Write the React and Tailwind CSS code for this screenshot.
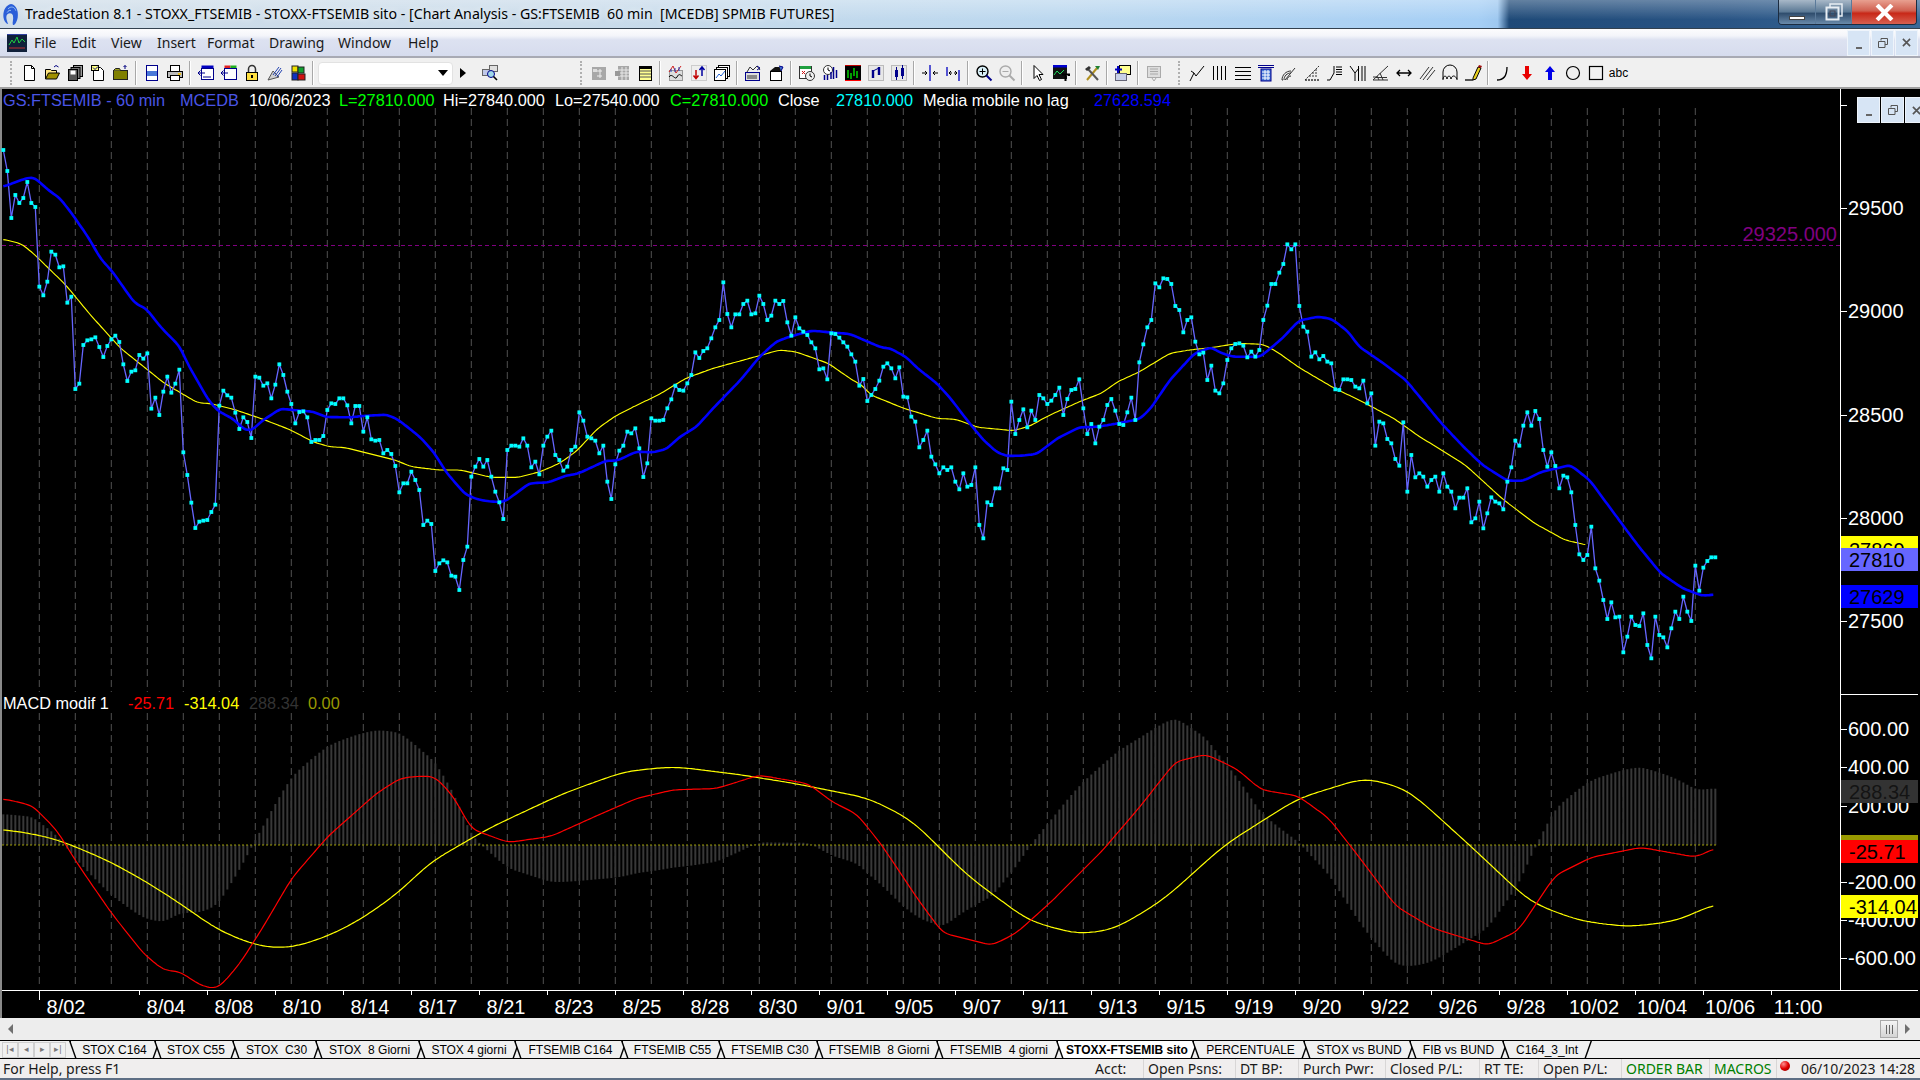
import React from "react";

// raw trace of the close, every 4px on x. y = 220 + v / 3
const closeTrace = [
  -210, -147, -6, -75, -51, -66, -114, -51, -39,
  200, 226, 185, 95, 104, 142, 139, 248, 230, 507, 491, 375, 361, 358, 352, 381, 411, 378, 358, 347, 366,
  433, 483, 455, 451, 405, 416, 400, 566, 533, 585, 515, 470, 518, 491, 449, 697, 765, 848, 924, 905,
  902, 900, 876, 854, 557, 512, 526, 533, 578, 627, 592, 606, 654, 470, 473, 497, 490, 535, 494, 433,
  465, 515, 552, 610, 576, 574, 592, 666, 660, 660, 648, 570, 550, 552, 535, 535, 556, 610, 558, 558,
  635, 592, 658, 662, 660, 700, 690, 702, 738, 817, 790, 790, 755, 780, 810, 915, 902, 912, 1053, 1030,
  1021, 1027, 1067, 1070, 1110, 1020, 980, 770, 740, 717, 740, 720, 770, 815, 847, 897, 690, 677, 677, 680,
  655, 677, 742, 725, 763, 677, 650, 632, 705, 720, 752, 740, 690, 680, 577, 602, 650, 655, 662, 700,
  677, 785, 837, 733, 692, 677, 635, 640, 625, 685, 771, 730, 595, 602, 602, 600, 565, 538, 497, 510,
  512, 490, 465, 397, 414, 393, 385, 355, 322, 300, 187, 282, 322, 283, 283, 252, 242, 283, 280, 227,
  252, 300, 287, 242, 252, 243, 307, 347, 292, 325, 335, 345, 367, 385, 448, 445, 478, 340, 342, 353,
  367, 380, 403, 425, 497, 477, 543, 525, 507, 482, 440, 430, 445, 475, 442, 530, 532, 590, 605, 682,
  660, 632, 710, 733, 760, 742, 750, 742, 785, 808, 760, 800, 795, 742, 915, 955, 847, 855, 805, 805,
  745, 750, 545, 642, 600, 568, 622, 572, 600, 525, 535, 552, 542, 525, 503, 585, 537, 510, 507, 478,
  565, 642, 612, 670, 620, 600, 555, 537, 572, 612, 615, 577, 533, 600, 427, 373, 322, 300, 190, 202,
  175, 177, 192, 258, 270, 337, 300, 292, 365, 403, 398, 480, 437, 512, 520, 490, 420, 385, 372, 370,
  377, 412, 395, 410, 390, 300, 257, 192, 192, 158, 132, 73, 88, 73, 258, 320, 335, 410, 397, 418,
  408, 425, 430, 508, 510, 478, 478, 480, 500, 505, 482, 550, 520, 677, 605, 610, 657, 670, 717, 737,
  607, 815, 705, 772, 760, 770, 800, 780, 770, 815, 760, 800, 815, 865, 833, 833, 805, 907, 895, 845,
  925, 880, 832, 845, 850, 868, 785, 742, 662, 677, 617, 577, 617, 573, 597, 690, 740, 697, 738, 805,
  767, 772, 817, 915, 1003, 1020, 1005, 920, 1045, 1082, 1140, 1197, 1147, 1192, 1190, 1297, 1250, 1190, 1215, 1218,
  1180, 1275, 1315, 1190, 1245, 1252, 1282, 1225, 1175, 1197, 1130, 1175, 1203, 1037, 1112, 1043, 1023, 1012, 1012,
];

const closePts = closeTrace.map((v, i) => [3.33 + 4 * i, 220 + v / 3]);

const fromA = (pts) => pts.map(([x, y]) => [x / 3, 130 + y / 3]);
const fromB = (pts) => pts.map(([x, y]) => [x / 1.823, 220 + y / 3]);
const fromC = (pts) => pts.map(([x, y]) => [860 + x / 1.823, 220 + y / 3]);
const fromD = (pts) => pts.map(([x, y]) => [x / 3, 680 + y / 3]);
const fromE = (pts) => pts.map(([x, y]) => [x * 1.2245, y * 1.2245]);

const blueMa = [
  ...fromA([[10, 170], [50, 155], [85, 143], [105, 144], [145, 180], [180, 205], [215, 250], [265, 322]]),
  ...fromB([[183, 115], [205, 155], [245, 248], [267, 267], [295, 325], [327, 378], [345, 440], [380, 540], [397, 572], [425, 597], [445, 628], [458, 632], [480, 600], [512, 566], [535, 570], [570, 575], [595, 591], [640, 592], [660, 588], [705, 584], [725, 598], [765, 650], [790, 695], [815, 760], [848, 822], [870, 838], [895, 845], [920, 845], [945, 815], [965, 790], [1000, 787], [1030, 768], [1055, 760], [1105, 722], [1125, 722], [1160, 695], [1190, 697], [1215, 687], [1240, 650], [1270, 620], [1300, 565], [1350, 480], [1385, 410], [1415, 365], [1440, 350], [1480, 332], [1520, 338], [1550, 342]]),
  ...fromC([[0, 355], [40, 383], [55, 385], [85, 412], [105, 445], [140, 490], [165, 535], [195, 600], [225, 660], [250, 697], [268, 708], [295, 707], [322, 702], [360, 655], [400, 622], [435, 620], [470, 610], [510, 597], [530, 565], [565, 480], [610, 400], [640, 382], [660, 400], [680, 410], [730, 410], [770, 355], [800, 302], [835, 290], [860, 297], [890, 335], [910, 380], [950, 425], [995, 480], [1060, 610], [1100, 680], [1135, 735], [1180, 782], [1210, 782], [1240, 757], [1295, 735], [1330, 780], [1395, 925], [1420, 980], [1460, 1060], [1500, 1105], [1535, 1127], [1558, 1124]]),
];

const yellowMa = [
  ...fromA([[10, 328], [40, 335], [65, 342], [100, 370]]),
  ...fromB([[70, 115], [120, 195], [165, 285], [220, 385], [300, 490], [360, 548], [385, 551], [430, 570], [480, 598], [530, 630], [570, 665], [600, 680], [630, 683], [720, 720], [750, 740], [800, 750], [840, 750], [895, 772], [945, 772], [985, 755], [1020, 730], [1050, 695], [1090, 625], [1120, 590], [1155, 560], [1200, 525], [1250, 475], [1300, 445], [1400, 400], [1420, 390], [1450, 395], [1510, 430], [1560, 487]]),
  ...fromC([[0, 490], [20, 525], [80, 565], [140, 595], [175, 598], [215, 622], [280, 632], [310, 618], [340, 590], [400, 545], [440, 520], [470, 485], [510, 455], [565, 400], [600, 390], [640, 383], [690, 370], [735, 373], [760, 395], [800, 442], [865, 505], [910, 540], [975, 597], [1020, 650], [1060, 690], [1105, 737], [1170, 835], [1230, 910], [1285, 960], [1325, 975]]),
];

const macdRedRaw = [
  ...fromD([[10, 357], [50, 365], [100, 378], [115, 395], [170, 450], [235, 555], [335, 700], [430, 820], [490, 870], [540, 875], [600, 915], [640, 926], [660, 920], [720, 850], [790, 740], [875, 595], [985, 468], [1130, 340], [1200, 295]]),
  ...fromE([[340, 634], [355, 634], [370, 650], [385, 677], [415, 688], [450, 683], [490, 665], [520, 652], [550, 645], [585, 644], [620, 633], [660, 640], [680, 655], [700, 665], [720, 690], [750, 735], [770, 762], [810, 772], [830, 762], [860, 735], [900, 695], [930, 660], [960, 622], [985, 616], [1010, 628], [1030, 645], [1060, 650], [1085, 668], [1110, 700], [1140, 740], [1170, 758], [1215, 772], [1240, 760], [1270, 715], [1300, 700], [1340, 692], [1385, 700], [1400, 693]]),
];

const macdYellowRaw = [
  ...fromD([[10, 448], [100, 462], [170, 478], [250, 510], [330, 545], [430, 600], [540, 670], [650, 748], [750, 790], [810, 804], [880, 802], [980, 770], [1080, 720], [1200, 635]]),
  ...fromE([[350, 705], [400, 676], [460, 648], [510, 630], [550, 626], [600, 632], [650, 640], [710, 652], [745, 670], [790, 715], [840, 752], [880, 763], [910, 759], [950, 735], [1000, 690], [1060, 652], [1115, 635], [1150, 645], [1200, 690], [1250, 737], [1290, 752], [1330, 757], [1370, 752], [1400, 738]]),
];

function valueAt(pts, x) {
  if (x <= pts[0][0]) return pts[0][1];
  for (let i = 1; i < pts.length; i++) {
    if (x <= pts[i][0]) {
      const [x0, y0] = pts[i - 1];
      const [x1, y1] = pts[i];
      return y0 + ((y1 - y0) * (x - x0)) / (x1 - x0 || 1);
    }
  }
  return pts[pts.length - 1][1];
}

// soften the hand traced corners, r is the half window in px
function smooth(pts, r) {
  const first = pts[0][0];
  const last = pts[pts.length - 1][0];
  const out = [];
  for (let x = first; x <= last; x += 2) {
    let sum = 0;
    let weight = 0;
    for (let k = -4; k <= 4; k++) {
      const w = 5 - Math.abs(k);
      sum += w * valueAt(pts, x + (k * r) / 4);
      weight += w;
    }
    out.push([x, sum / weight]);
  }
  return out;
}

const blueLine = smooth(blueMa, 5);
const yellowLine = smooth(yellowMa, 6);
const macdRed = smooth(macdRedRaw, 9);
const macdYellow = smooth(macdYellowRaw, 22);

const toPoints = (pts) => pts.map(([x, y]) => `${x.toFixed(1)},${y.toFixed(1)}`).join(" ");

const gridXs = Array.from({ length: 47 }, (_, i) => 39.3 + 36 * i);

const dates = ["8/04", "8/08", "8/10", "8/14", "8/17", "8/21", "8/23", "8/25", "8/28", "8/30", "9/01", "9/05", "9/07", "9/11", "9/13", "9/15", "9/19", "9/20", "9/22", "9/26", "9/28", "10/02", "10/04", "10/06", "11:00"];

const priceTicks = [
  [105, ""],
  [208, "29500"],
  [311, "29000"],
  [415, "28500"],
  [518, "28000"],
  [621, "27500"],
];

const macdTicks = [
  [729, "600.00"],
  [767, "400.00"],
  [806, "200.00"],
  [882, "-200.00"],
  [920, "-400.00"],
  [958, "-600.00"],
];

function ChartDrawing() {
  const bars = [];
  for (let i = 0; i < 429; i++) {
    const x = 3.33 + 4 * i;
    const diff = valueAt(macdYellow, x) - valueAt(macdRed, x);
    bars.push(<rect key={i} x={x - 1} y={Math.min(845, 845 - diff)} width="2" height={Math.abs(diff)} fill="#383838" />);
  }

  return (
    <svg viewBox="0 89 1920 929" className="block h-full w-full font-['Liberation_Sans',sans-serif]">
      {gridXs.map((x) => (
        <g key={x} stroke="#505050" strokeDasharray="7 4">
          <line x1={x} y1="108" x2={x} y2="692" />
          <line x1={x} y1="713" x2={x} y2="988" />
        </g>
      ))}
      <line x1="2" y1="245.5" x2="1840" y2="245.5" stroke="#800080" strokeDasharray="4 3" />

      {/* price pane */}
      <polyline points={toPoints(yellowLine)} fill="none" stroke="#ffff00" strokeWidth="1.15" />
      <polyline points={toPoints(closePts)} fill="none" stroke="#6666ff" strokeWidth="1.3" />
      <polyline points={toPoints(blueLine)} fill="none" stroke="#0000ff" strokeWidth="2.6" />
      {closePts.map(([x, y]) => (
        <rect key={x} x={x - 1.9} y={y - 1.9} width="3.8" height="3.8" fill="#00ffff" />
      ))}
      <text x="1837" y="241" textAnchor="end" className="fill-[#800080] text-[20px]">29325.000</text>

      {/* macd pane */}
      {bars}
      <line x1="2" y1="845" x2="1716" y2="845" stroke="#999900" strokeDasharray="2 2" />
      <polyline points={toPoints(macdYellow)} fill="none" stroke="#ffff00" strokeWidth="1.2" />
      <polyline points={toPoints(macdRed)} fill="none" stroke="#ff0000" strokeWidth="1.2" />

      {/* right scale */}
      <line x1="1840.5" y1="89" x2="1840.5" y2="990" stroke="#fff" />
      <line x1="1841" y1="694.5" x2="1918" y2="694.5" stroke="#fff" />
      {priceTicks.map(([y, label]) => (
        <g key={y}>
          <line x1="1841" y1={y + 0.5} x2="1847" y2={y + 0.5} stroke="#fff" />
          <text x="1848" y={y + 7} className="fill-white text-[20px]">{label}</text>
        </g>
      ))}
      {macdTicks.map(([y, label]) => (
        <g key={y}>
          <line x1="1841" y1={y + 0.5} x2="1847" y2={y + 0.5} stroke="#fff" />
          <text x="1848" y={y + 7} className="fill-white text-[20px]">{label}</text>
        </g>
      ))}

      <rect x="1841" y="536" width="77" height="14" fill="#ffff00" />
      <text x="1849" y="557" className="fill-black text-[20px]">27869</text>
      <rect x="1841" y="548" width="77" height="23" fill="#6666ff" />
      <text x="1849" y="567" className="fill-black text-[20px]">27810</text>
      <rect x="1841" y="585" width="77" height="23" fill="#0000ff" />
      <text x="1849" y="604" className="fill-black text-[20px]">27629</text>

      <rect x="1841" y="780" width="77" height="23" fill="#333333" />
      <text x="1849" y="799" className="fill-[#141414] text-[20px]">288.34</text>
      <rect x="1841" y="835" width="77" height="6" fill="#999900" />
      <rect x="1841" y="840" width="77" height="23" fill="#ff0000" />
      <text x="1849" y="859" className="fill-black text-[20px]">-25.71</text>
      <rect x="1841" y="895" width="77" height="23" fill="#ffff00" />
      <text x="1849" y="914" className="fill-black text-[20px]">-314.04</text>

      {/* date scale */}
      <line x1="2" y1="990.5" x2="1918" y2="990.5" stroke="#fff" />
      <line x1="39.5" y1="990" x2="39.5" y2="1000" stroke="#fff" />
      <text x="66" y="1014" textAnchor="middle" className="fill-white text-[20px]">8/02</text>
      {dates.map((d, i) => (
        <g key={d}>
          <line x1={139.5 + 68 * i} y1="990" x2={139.5 + 68 * i} y2="995" stroke="#fff" />
          <text x={166 + 68 * i} y="1014" textAnchor="middle" className="fill-white text-[20px]">{d}</text>
        </g>
      ))}
    </svg>
  );
}

const K = { stroke: "#000", fill: "none" };

const icons = {
  newDoc: <><path d="M4.5 1.5h7l3 3v12h-10z" fill="#fff" stroke="#000" /><path d="M11.5 1.5v3h3" {...K} /></>,
  open: <><path d="M2.5 15V5.5h5l1 1h5v3" fill="#ffe680" stroke="#000" /><path d="M2.5 15l3-6h11l-3 6z" fill="#a09000" stroke="#000" /><path d="M11 3l2-1.5 2.5 1.5" stroke="#000080" fill="none" /></>,
  floppies: <><rect x="7.5" y="1.5" width="9" height="11" fill="#999" stroke="#000" /><rect x="5" y="3.5" width="9" height="11" fill="#777" stroke="#000" /><rect x="2.5" y="5.5" width="9" height="11" fill="#555" stroke="#000" /><rect x="4.5" y="6.5" width="5" height="4" fill="#fff" /></>,
  noteDoc: <><path d="M4.5 3.5h7l3 3v10h-10z" fill="#fff" stroke="#000" /><rect x="2.5" y="1.5" width="7" height="5" fill="#ffff80" stroke="#000" /><path d="M4 3.5l2 2 3-3" stroke="#000080" fill="none" /></>,
  box: <><rect x="1.5" y="6.5" width="14" height="9" fill="#808000" stroke="#222" /><path d="M1.5 6.5l2-2h4l1 2" fill="#a0a020" stroke="#222" /><path d="M13 5V1.5M11.5 3L13 1.5 14.5 3" stroke="#000080" fill="none" /></>,
  preview: <><rect x="3.5" y="1.5" width="11" height="15" fill="#fff" stroke="#00008b" /><rect x="4" y="7" width="10" height="5" fill="#4a78d8" /></>,
  printer: <><rect x="4.5" y="1.5" width="9" height="6" fill="#fff" stroke="#000" /><rect x="1.5" y="7.5" width="15" height="6" fill="#bbb" stroke="#000" /><rect x="4.5" y="11.5" width="9" height="5" fill="#fff" stroke="#000" /><rect x="12" y="9" width="3" height="2" fill="#e8c020" /></>,
  winBlue: <><rect x="4.5" y="1.5" width="12" height="3" fill="#0000c0" /><rect x="4.5" y="4.5" width="12" height="11" fill="#fff" stroke="#00008b" /><path d="M1 9h7M3.5 6.5L1 9l2.5 2.5" stroke="#00008b" fill="none" /><path d="M6 13h8" stroke="#00008b" /></>,
  winFlag: <><rect x="4.5" y="1.5" width="6" height="3" fill="#e02020" /><rect x="10.5" y="1.5" width="6" height="3" fill="#20b020" /><rect x="4.5" y="4.5" width="12" height="11" fill="#fff" stroke="#00008b" /><path d="M1 9h7M3.5 6.5L1 9l2.5 2.5" stroke="#00008b" fill="none" /></>,
  lock: <><path d="M5.5 8V5a3.5 3.5 0 017 0v3" stroke="#333" strokeWidth="1.5" fill="none" /><rect x="3.5" y="8.5" width="11" height="8" fill="#ffe040" stroke="#000" /><rect x="8" y="11" width="2" height="3" fill="#000" /></>,
  dish: <><path d="M2 16l5-9 6 6z" fill="#d0d0d0" stroke="#555" /><path d="M7 11l6-8M9 12l6-8M11 13l5-7" stroke="#2040b0" /></>,
  cubes: <><rect x="3" y="2" width="6" height="6" fill="#f0e000" stroke="#222" /><rect x="9" y="3" width="6" height="6" fill="#10a030" stroke="#222" /><rect x="3" y="9" width="6" height="7" fill="#1030c0" stroke="#222" /><rect x="9" y="10" width="7" height="6" fill="#d01010" stroke="#222" /></>,
  searchDoc: <><rect x="1.5" y="5.5" width="9" height="6" fill="#c0c8e8" stroke="#666" /><rect x="8.5" y="1.5" width="8" height="6" fill="#e0e0e0" stroke="#666" /><circle cx="10" cy="10" r="3.5" fill="#a0d8e8" stroke="#00008b" /><path d="M12.5 12.5l3.5 3.5" stroke="#000" strokeWidth="1.6" /></>,
  grayCalc: <><rect x="2" y="3" width="14" height="13" fill="#a8a8a8" /><path d="M10 5v9M7 7h5M7 12h5" stroke="#eee" /><rect x="3" y="5" width="4" height="3" fill="#ddd" /></>,
  grayTable: <><rect x="5" y="2" width="11" height="14" fill="#a8a8a8" /><path d="M5 6h11M5 9h11M5 12h11M9 3v13M13 3v13" stroke="#e8e8e8" /><rect x="2" y="7" width="5" height="5" fill="#999" /></>,
  table: <><rect x="3.5" y="2.5" width="12" height="14" fill="#ffff90" stroke="#000" /><rect x="3" y="2" width="13" height="3" fill="#000" /><path d="M4 7h11M4 10h11M4 13h11" stroke="#555" /></>,
  waves: <><rect x="2.5" y="6.5" width="13" height="10" fill="#ddd" stroke="#999" /><path d="M2 8l4-6 3 7 5-7" stroke="#d02020" fill="none" /><path d="M2 13c3-5 6 4 8 0s3-2 5-1" stroke="#000" fill="none" /><path d="M4 5v3M8 4v4M12 3v4" stroke="#2040c0" /></>,
  updown: <><rect x="1.5" y="1.5" width="15" height="15" fill="#eee" stroke="#ccc" /><path d="M6 6v8M3.5 11.5L6 14.5 8.5 11.5" stroke="#c00000" strokeWidth="1.5" fill="none" /><path d="M12 12V3M9.5 6L12 3l2.5 3" stroke="#0000a0" strokeWidth="1.5" fill="none" /></>,
  stack: <><rect x="5.5" y="1.5" width="11" height="11" fill="#fff" stroke="#000" /><rect x="3.5" y="3.5" width="11" height="11" fill="#fff" stroke="#000" /><rect x="1.5" y="5.5" width="11" height="11" fill="#fff" stroke="#000" /><path d="M3 14l3-4 2 2 4-5" stroke="#2060d0" fill="none" /></>,
  winChart: <><rect x="1.5" y="8.5" width="14" height="8" fill="#ddd" stroke="#00008b" /><path d="M3 8l3-5 3 3 4-4 3 4M3 12h10M3 14h10" stroke="#333" fill="none" /><path d="M13 2l3 2-3 2" stroke="#00008b" fill="none" /></>,
  box2: <><rect x="3.5" y="7.5" width="11" height="9" fill="#fff" stroke="#000" /><path d="M3 7l5-4 7 0-1 4z" fill="#111" /><path d="M12 2l4 1-2 4" stroke="#00008b" fill="#4070d0" /></>,
  calClock: <><rect x="1.5" y="2.5" width="12" height="12" fill="#fff" stroke="#333" /><rect x="2" y="2" width="11" height="3" fill="#20a040" /><path d="M4 7l3 3M7 7l-3 3" stroke="#d01010" /><circle cx="12" cy="12" r="4.5" fill="#eee" stroke="#333" /><path d="M12 9.5V12l2 1" stroke="#000" fill="none" /></>,
  clockBars: <><circle cx="7" cy="6" r="4.5" fill="#fff" stroke="#333" /><path d="M7 3.5V6l2 1" stroke="#000" fill="none" /><path d="M3.5 11v5M6.5 11v5" stroke="#00008b" strokeWidth="1.5" /><path d="M12.5 3v12M15.5 6v8M10 8v7" stroke="#00008b" strokeWidth="1.5" /></>,
  greenBars: <><rect x="1" y="1" width="16" height="16" fill="#000" /><path d="M4 6v8M7 9v6M10 4v8M13 7v7" stroke="#00e000" strokeWidth="1.4" /><path d="M1 16.5h16" stroke="#ff0000" /><path d="M1 1.5h16" stroke="#c00000" /></>,
  blueN: <><rect x="1.5" y="1.5" width="15" height="15" fill="#e8e8e8" stroke="#bbb" /><path d="M6 6v8M12 3v8" stroke="#00008b" strokeWidth="2.4" /><path d="M6 7l6-3" stroke="#00008b" /></>,
  candles: <><rect x="1.5" y="1.5" width="15" height="15" fill="#e8e8e8" stroke="#bbb" /><rect x="5" y="6" width="3" height="7" fill="#00008b" /><rect x="11" y="4" width="3" height="8" fill="#00008b" /><path d="M6.5 3v13M12.5 1v14" stroke="#00008b" /></>,
  splitIn: <><path d="M9 1v16" stroke="#0000c0" strokeWidth="1.3" /><path d="M1 9h5M4 7l2 2-2 2M17 9h-5M14 7l-2 2 2 2" stroke="#000" fill="none" /></>,
  splitOut: <><path d="M3 3v9M15 6v11" stroke="#0000c0" strokeWidth="1.3" /><path d="M5 9h3M7 7L5 9l2 2M13 9h-3M11 7l2 2-2 2" stroke="#000" fill="none" /></>,
  zoomIn: <><circle cx="7.5" cy="7.5" r="5.5" fill="#d8f0f8" stroke="#000" strokeWidth="1.4" /><path d="M7.5 4.5v6M4.5 7.5h6" stroke="#000" /><path d="M11.5 11.5l5 5" stroke="#00008b" strokeWidth="2" /></>,
  zoomOut: <><circle cx="7.5" cy="7.5" r="5.5" fill="#eee" stroke="#aaa" strokeWidth="1.4" /><path d="M4.5 7.5h6" stroke="#aaa" /><path d="M11.5 11.5l5 5" stroke="#aaa" strokeWidth="2" /></>,
  cursor: <path d="M5 1.5v13l3-3 2.5 5 2-1-2.5-5h4z" fill="#fff" stroke="#000" />,
  chartT: <><rect x="1" y="1" width="14" height="14" fill="#111" /><rect x="1" y="1" width="14" height="2.5" fill="#0000d0" /><path d="M2 11l3-4 3 3 4-4" stroke="#20e060" fill="none" /><path d="M10 10.5h7v1.5M13.5 10.5v6.5" stroke="#000" strokeWidth="2" fill="#fff" /></>,
  tools: <><path d="M4 16L14 4" stroke="#b09020" strokeWidth="2" /><path d="M15 16L5 5" stroke="#555" strokeWidth="2" /><path d="M2 5l4-3 2 2-4 3z" fill="#333" /><path d="M12 2h5l-2 4z" fill="#208030" /></>,
  plusWin: <><rect x="5.5" y="1.5" width="11" height="9" fill="#ffff90" stroke="#000" /><rect x="1.5" y="9.5" width="11" height="7" fill="#c8d0e8" stroke="#667" /><path d="M4 2v7M1 5.5h7" stroke="#0000c0" strokeWidth="2" /></>,
  grayNote: <><rect x="2.5" y="2.5" width="13" height="11" fill="#ddd" stroke="#aaa" /><path d="M5 5h8M5 7.5h8M5 10h8M7 14l2 3 2-3" stroke="#aaa" fill="none" /></>,
  trend: <path d="M2 17l4-8 2 3L16 2M6 9l-3-2" {...K} />,
  vlines: <path d="M2.5 2v14M6.5 2v14M10.5 2v14M14.5 2v14" {...K} />,
  hlines: <path d="M1 3.5h16M1 7.5h16M1 11.5h16M1 15.5h16" stroke="#000" strokeWidth="1.2" />,
  calc: <><path d="M1 1.5h16M1 3.5h16" stroke="#00008b" /><rect x="4" y="5" width="10" height="12" fill="#4a78d8" stroke="#00008b" /><path d="M5 8h8M5 11h8M5 14h8M8 6v10M11 6v10" stroke="#fff" /></>,
  gauge: <path d="M2 16c0-5 4-9 9-9M4 16c0-4 3-7 7-7M7 16c0-2 2-4 4-4M5 16L15 4M2 16h1" stroke="#333" fill="none" />,
  fib: <path d="M2 16L16 2M2 16h14M6 12h8M9 9h6M12 6h3M2 16h14" stroke="#333" strokeDasharray="2 1" fill="none" />,
  step: <path d="M1 16l3 0 4-7V2M10 3h6M10 5.5h6M10 8h6M10 10.5h6" {...K} />,
  ylines: <path d="M1 2l5 7M6 9v8M9.5 2v15M13 2v15M16 2v15M6 9L10 4" {...K} />,
  angle: <path d="M1 16L16 2M1 16h15M5 12l2 4M1 13h3M8 9l3 7M4 13.5h11" stroke="#333" fill="none" />,
  dblArrow: <path d="M2 9h14M5 6L2 9l3 3M13 6l3 3-3 3" stroke="#000" strokeWidth="1.3" fill="none" />,
  parallels: <path d="M2 15L11 3M5 16L15 3M9 16l8-10" stroke="#333" fill="none" />,
  arches: <><path d="M2 16V8a7 7 0 0114 0v8" {...K} /><path d="M2 15c1-4 3-4 4 0M6 15c1-4 3-4 4 0M10 15c1-4 4-4 6 0" {...K} /></>,
  pen: <><path d="M1 16h8" stroke="#000" strokeWidth="1.3" /><path d="M9 14l5-11 3 1-5 11-3 1z" fill="#e8d020" stroke="#000" /><path d="M14 3l1-2 3 1-1 2z" fill="#a01010" /></>,
  curve: <path d="M2 16c6 0 10-3 10-13" stroke="#000" strokeWidth="1.3" fill="none" />,
  redDown: <path d="M7 2h4v8h3l-5 6-5-6h3z" fill="#e80000" />,
  blueUp: <path d="M9 2l5 6h-3v8H7V8H4z" fill="#0000e8" />,
  circle: <circle cx="9" cy="9" r="6.5" fill="none" stroke="#000" strokeWidth="1.2" />,
  square: <rect x="2.5" y="2.5" width="13" height="13" fill="none" stroke="#000" strokeWidth="1.2" />,
};

function ToolIcon({ name }) {
  return (
    <span className="flex h-[23px] w-[23px] items-center justify-center">
      <svg viewBox="0 0 18 18" className="h-[18px] w-[18px]">{icons[name]}</svg>
    </span>
  );
}

const Sep = () => (
  <span className="flex w-[8px] justify-center">
    <span className="h-[24px] w-[2px] border-r border-l border-r-white border-l-[#a8a8a8]" />
  </span>
);

const Gripper = ({ className }) => (
  <span className={`h-[24px] w-[3px] border-l-2 border-dotted border-[#b0b0b0] ${className}`} />
);

const ToolGroup = ({ names }) => names.map((n) => <ToolIcon key={n} name={n} />);

function Toolbar() {
  return (
    <div className="flex h-[31px] shrink-0 items-center border-b-2 border-[#a0a0a0] bg-[#f0f0f0] pt-[1px] pl-[10px]">
      <Gripper className="mr-[4px]" />
      <ToolGroup names={["newDoc", "open", "floppies", "noteDoc", "box"]} />
      <Sep />
      <ToolGroup names={["preview", "printer"]} />
      <Sep />
      <ToolGroup names={["winBlue", "winFlag", "lock", "dish", "cubes"]} />
      <Sep />
      <div className="ml-[1px] flex h-[23px] w-[135px] items-center justify-end rounded-sm border border-[#e2e2e2] bg-white pr-[4px]">
        <span className="h-0 w-0 border-x-[5px] border-t-[6px] border-x-transparent border-t-black" />
      </div>
      <span className="flex w-[20px] justify-center">
        <span className="h-0 w-0 border-y-[5px] border-l-[6px] border-y-transparent border-l-black" />
      </span>
      <span className="ml-[5px]"><ToolIcon name="searchDoc" /></span>
      <Gripper className="mr-[4px] ml-[79px]" />
      <ToolGroup names={["grayCalc", "grayTable", "table"]} />
      <Sep />
      <ToolGroup names={["waves", "updown", "stack"]} />
      <Sep />
      <ToolGroup names={["winChart", "box2"]} />
      <Sep />
      <ToolGroup names={["calClock", "clockBars", "greenBars", "blueN", "candles"]} />
      <Sep />
      <ToolGroup names={["splitIn", "splitOut"]} />
      <Sep />
      <ToolGroup names={["zoomIn", "zoomOut"]} />
      <Sep />
      <ToolGroup names={["cursor", "chartT"]} />
      <Sep />
      <ToolIcon name="tools" />
      <Sep />
      <ToolIcon name="plusWin" />
      <Sep />
      <ToolIcon name="grayNote" />
      <Gripper className="mr-[4px] ml-[13px]" />
      <ToolGroup names={["trend", "vlines", "hlines", "calc", "gauge", "fib", "step", "ylines", "angle", "dblArrow", "parallels", "arches", "pen"]} />
      <Sep />
      <ToolGroup names={["curve", "redDown", "blueUp", "circle", "square"]} />
      <span className="flex w-[23px] justify-center font-['Liberation_Sans',sans-serif] text-[12px] leading-none text-black">abc</span>
    </div>
  );
}

function MdiButtons({ className }) {
  return (
    <div className={`flex gap-[1px] ${className}`}>
      <span className="flex h-[26px] w-[23px] shrink-0 items-end justify-center border border-[#eef4fb] bg-[#d7e5f5] pb-[6px]">
        <span className="h-[2px] w-[6px] bg-[#666]" />
      </span>
      <span className="flex h-[26px] w-[23px] shrink-0 items-center justify-center border border-[#eef4fb] bg-[#d7e5f5]">
        <svg viewBox="0 0 10 10" className="h-[10px] w-[10px]"><path d="M3 2.5V.5h6.5v6H7M.5 3.5h6.5v6H.5z" fill="none" stroke="#555" /></svg>
      </span>
      <span className="flex h-[26px] w-[23px] shrink-0 items-center justify-center border border-[#eef4fb] bg-[#d7e5f5]">
        <svg viewBox="0 0 10 10" className="h-[9px] w-[9px]"><path d="M1 1l8 8M9 1l-8 8" stroke="#555" strokeWidth="1.8" /></svg>
      </span>
    </div>
  );
}

function TitleBar() {
  return (
    <div className="flex h-[29px] shrink-0 items-start border-b border-[#33414f] bg-[linear-gradient(180deg,rgba(255,255,255,0.3),rgba(255,255,255,0)_70%),linear-gradient(90deg,#cfdde9_0%,#c9dbea_30%,#bcd8ef_55%,#a6cff5_77%,#9ec8f0_78%,#1f4a78_78.6%,#2a5585_90%,#3a6a98_100%)] pl-[2px]">
      <svg viewBox="0 0 18 24" className="mt-[3px] h-[23px] w-[18px]">
        <path d="M9 1c6 1 8 8 7 14-1 5-3 8-5 8-1-3 1-6 0-10-1-3-4-3-6-1-2 3 0 7 1 10-3-1-5-5-5-9C1 7 4 2 9 1z" fill="#2b5fd8" />
        <path d="M6 6c3-3 7-2 8 2M5 10c1-2 3-3 4-2" stroke="#9cc4f4" fill="none" />
      </svg>
      <span className="mt-[3px] ml-[5px] font-['Noto_Sans',sans-serif] text-[14.2px] leading-[22px] whitespace-pre text-black [text-shadow:0_0_6px_#fff]">
        {"TradeStation 8.1 - STOXX_FTSEMIB - STOXX-FTSEMIB sito - [Chart Analysis - GS:FTSEMIB  60 min  [MCEDB] SPMIB FUTURES]"}
      </span>
      <div className="mr-[3px] ml-auto flex h-[25px] overflow-hidden rounded-b-[4px] border border-t-0 border-[#1c2c40]">
        <span className="flex w-[37px] items-end justify-center border-r border-[#5b7a9a] bg-[linear-gradient(#a8b8c8,#5a7894_50%,#2e4c6c_55%,#6a8aaa)] pb-[4px]">
          <span className="h-[4px] w-[16px] border border-[#444] bg-white" />
        </span>
        <span className="flex w-[36px] items-center justify-center border-r border-[#5b7a9a] bg-[linear-gradient(#a8b8c8,#5a7894_50%,#2e4c6c_55%,#6a8aaa)]">
          <svg viewBox="0 0 18 18" className="h-[18px] w-[18px]">
            <path d="M5 4V1h12v12h-3" fill="none" stroke="#e8eef4" strokeWidth="1.5" />
            <rect x="1.5" y="4.5" width="12" height="12" fill="none" stroke="#e8eef4" strokeWidth="2" />
            <rect x="5" y="8" width="5" height="5" fill="none" stroke="#445" />
          </svg>
        </span>
        <span className="flex w-[64px] items-center justify-center bg-[linear-gradient(#e8a090,#d06050_45%,#c82818_55%,#d86050)]">
          <svg viewBox="0 0 18 16" className="h-[17px] w-[19px]"><path d="M2 1l14 14M16 1L2 15" stroke="#fff" strokeWidth="4" /></svg>
        </span>
      </div>
    </div>
  );
}

const menuItems = [
  ["File", "w-[37px]"],
  ["Edit", "w-[40px]"],
  ["View", "w-[46px]"],
  ["Insert", "w-[50px]"],
  ["Format", "w-[62px]"],
  ["Drawing", "w-[69px]"],
  ["Window", "w-[70px]"],
  ["Help", "w-[40px]"],
];

function MenuBar() {
  return (
    <div className="flex h-[29px] shrink-0 items-center border-b-2 border-[#a8aab4] bg-[linear-gradient(#fcfcfd_0%,#f4f5fa_25%,#dde2f1_40%,#d6dcee_100%)] pl-[7px]">
      <svg viewBox="0 0 20 18" className="h-[18px] w-[20px]">
        <rect width="20" height="18" fill="#10203a" />
        <path d="M2 11l3-5 2 3 3-6 2 6 3-4 3 3" stroke="#20d040" fill="none" />
        <path d="M2 14h16" stroke="#c03030" />
        <path d="M0 0h20" stroke="#3040a0" strokeWidth="2" />
      </svg>
      <div className="ml-[7px] flex font-['Noto_Sans',sans-serif] text-[14px] text-[#1a1a1a]">
        {menuItems.map(([label, width]) => (
          <span key={label} className={width}>{label}</span>
        ))}
      </div>
      <MdiButtons className="mr-[2px] ml-auto" />
    </div>
  );
}

const legendItems = [
  ["GS:FTSEMIB - 60 min", "w-[177px] text-[#4a55e6]"],
  ["MCEDB", "w-[69px] text-[#4a55e6]"],
  ["10/06/2023", "w-[90px] text-white"],
  ["L=27810.000", "w-[104px] text-[#00ff00]"],
  ["Hi=27840.000", "w-[112px] text-white"],
  ["Lo=27540.000", "w-[115px] text-white"],
  ["C=27810.000", "w-[108px] text-[#00ff00]"],
  ["Close", "w-[58px] text-white"],
  ["27810.000", "w-[87px] text-[#00ffff]"],
  ["Media mobile no lag", "w-[171px] text-white"],
  ["27628.594", "text-[#0000ff]"],
];

function ChartPanel() {
  return (
    <div className="relative min-h-0 flex-1 border-l-2 border-[#8a8a8a] bg-black font-['Liberation_Sans',sans-serif]">
      <div className="absolute top-0 -left-[2px] h-full w-[1920px]">
        <ChartDrawing />
      </div>
      <div className="absolute top-[2px] left-[1px] flex text-[16.3px] leading-[19px] whitespace-nowrap">
        {legendItems.map(([label, cls]) => (
          <span key={label} className={cls}>{label}</span>
        ))}
      </div>
      <div className="absolute top-[605px] left-[1px] flex text-[16.3px] leading-[19px] whitespace-nowrap">
        <span className="w-[125px] text-white">MACD modif 1</span>
        <span className="w-[56px] text-[#ff0000]">-25.71</span>
        <span className="w-[65px] text-[#ffff00]">-314.04</span>
        <span className="w-[59px] text-[#333333]">288.34</span>
        <span className="text-[#999900]">0.00</span>
      </div>
      <MdiButtons className="absolute top-[8px] -right-[8px] w-[71px]" />
    </div>
  );
}

function ScrollBar() {
  return (
    <div className="flex h-[22px] shrink-0 items-center bg-[#ededed] pr-[10px] pl-[8px]">
      <span className="h-0 w-0 border-y-[5px] border-r-[5px] border-y-transparent border-r-[#707070]" />
      <span className="mr-[7px] ml-auto flex h-[18px] w-[18px] items-center justify-center gap-[2px] border border-[#a9a9a9] bg-[linear-gradient(#f4f4f4,#d4d4d4)]">
        <span className="h-[9px] w-[1px] bg-[#666]" />
        <span className="h-[9px] w-[1px] bg-[#666]" />
        <span className="h-[9px] w-[1px] bg-[#666]" />
      </span>
      <span className="h-0 w-0 border-y-[5px] border-l-[5px] border-y-transparent border-l-[#707070]" />
    </div>
  );
}

const tabs = [
  ["STOX C164", "w-[91px]"],
  ["STOX C55", "w-[84px]"],
  ["STOX  C30", "w-[89px]"],
  ["STOX  8 Giorni", "w-[109px]"],
  ["STOX 4 giorni", "w-[102px]"],
  ["FTSEMIB C164", "w-[113px]"],
  ["FTSEMIB C55", "w-[103px]"],
  ["FTSEMIB C30", "w-[104px]"],
  ["FTSEMIB  8 Giorni", "w-[126px]"],
  ["FTSEMIB  4 giorni", "w-[126px]"],
  ["STOXX-FTSEMIB sito", "w-[142px]", true],
  ["PERCENTUALE", "w-[117px]"],
  ["STOX vs BUND", "w-[112px]"],
  ["FIB vs BUND", "w-[99px]"],
  ["C164_3_Int", "w-[90px]"],
];

function TabStrip() {
  return (
    <div className="flex h-[19px] shrink-0 border-y border-black bg-[#f0f0f0] font-['Liberation_Sans',sans-serif] text-[12px] text-black">
      <div className="flex w-[69px] shrink-0 items-center pl-[2px]">
        {["|◂", "◂", "▸", "▸|"].map((g) => (
          <span key={g} className="flex h-[16px] w-[16px] items-center justify-center border border-[#cfcfcf] text-[9px] text-[#777]">{g}</span>
        ))}
      </div>
      {tabs.map(([label, width, active]) => (
        <div key={label} className={`relative -mr-[6px] h-full shrink-0 bg-black [clip-path:polygon(0_0,100%_0,calc(100%-6px)_100%,6px_100%)] ${width}`}>
          <div className={`absolute inset-x-[1.5px] inset-y-0 flex items-center justify-center whitespace-pre [clip-path:polygon(0_0,100%_0,calc(100%-6px)_100%,6px_100%)] ${active ? "bg-white font-bold" : "bg-[#f0f0f0]"}`}>
            {label}
          </div>
        </div>
      ))}
    </div>
  );
}

const statusCells = [
  ["Acct:", "w-[53px]"],
  ["Open Psns:", "w-[92px]"],
  ["DT BP:", "w-[63px]"],
  ["Purch Pwr:", "w-[87px]"],
  ["Closed P/L:", "w-[94px]"],
  ["RT TE:", "w-[59px]"],
  ["Open P/L:", "w-[83px]"],
  ["ORDER BAR", "w-[88px] text-[#008000]"],
  ["MACROS", "w-[67px] text-[#008000]"],
];

function StatusBar() {
  return (
    <div className="flex h-[19px] shrink-0 items-center bg-[#f0eeee] pl-[3px] font-['Noto_Sans',sans-serif] text-[14px] leading-[19px] whitespace-nowrap text-[#1a1a1a]">
      <span>For Help, press F1</span>
      <div className="ml-auto flex h-full items-center">
        {statusCells.map(([label, cls]) => (
          <span key={label} className={`h-full border-r border-[#d8d6d6] pl-[4px] ${cls}`}>{label}</span>
        ))}
        <span className="flex h-full w-[24px] justify-start pt-[2px] pl-[3px]">
          <span className="h-[10px] w-[10px] rounded-full bg-[radial-gradient(circle_at_35%_30%,#ff9090,#e00000_50%,#800000)]" />
        </span>
        <span className="w-[119px]">06/10/2023 14:28</span>
      </div>
    </div>
  );
}

export default function App() {
  return (
    <div className="flex h-[1080px] w-[1920px] flex-col overflow-hidden bg-[#f0f0f0]">
      <TitleBar />
      <MenuBar />
      <Toolbar />
      <ChartPanel />
      <ScrollBar />
      <TabStrip />
      <StatusBar />
      <div className="h-[2px] shrink-0 bg-[#5e6e84]" />
    </div>
  );
}
